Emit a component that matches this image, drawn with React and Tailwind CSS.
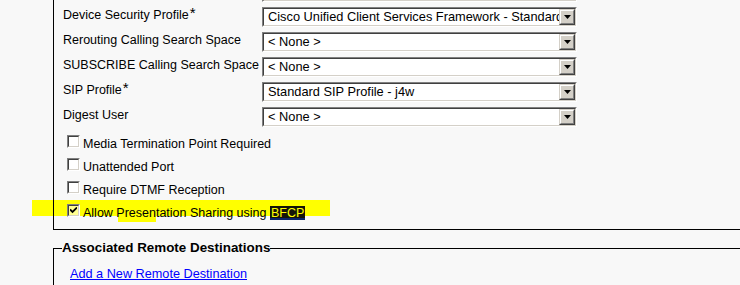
import React from 'react';

const rows = [
  { label: '', value: '', required: false },
  { label: 'Device Security Profile', value: 'Cisco Unified Client Services Framework - Standard SIP Non-Secure Profile', required: true },
  { label: 'Rerouting Calling Search Space', value: '< None >' },
  { label: 'SUBSCRIBE Calling Search Space', value: '< None >' },
  { label: 'SIP Profile', value: 'Standard SIP Profile - j4w', required: true },
  { label: 'Digest User', value: '< None >' },
];

const checks = [
  { label: 'Media Termination Point Required', checked: false },
  { label: 'Unattended Port', checked: false },
  { label: 'Require DTMF Reception', checked: false },
  { label: 'Allow Presentation Sharing using', checked: true, selected: 'BFCP' },
];

function Select({ value }) {
  return (
    <div className="w-[315px] h-[20px] border border-t-[#808080] border-l-[#808080] border-b-white border-r-white">
      <div className="h-full flex border border-t-[#404040] border-l-[#404040] border-b-[#d4d0c8] border-r-[#d4d0c8] bg-white">
        <div className="flex-1 min-w-0 overflow-hidden whitespace-nowrap pl-[4px] text-[12.8px] leading-[16px] text-black">
          {value}
        </div>
        <div className="w-[16px] h-full border border-t-[#d4d0c8] border-l-[#d4d0c8] border-b-[#404040] border-r-[#404040]">
          <div className="h-full flex items-center justify-center bg-[#d4d0c8] border border-t-white border-l-white border-b-[#808080] border-r-[#808080]">
            <svg width="7" height="4" viewBox="0 0 7 4">
              <path d="M0 0h7L3.5 4z" fill="#000" />
            </svg>
          </div>
        </div>
      </div>
    </div>
  );
}

function Checkbox({ checked }) {
  return (
    <div className="w-[13px] h-[13px] mb-[4px] shrink-0 border border-t-[#808080] border-l-[#808080] border-b-white border-r-white">
      <div className={`w-full h-full flex items-center justify-center border border-t-[#404040] border-l-[#404040] border-b-[#d4d0c8] border-r-[#d4d0c8] ${checked ? 'bg-[#ffff90]' : 'bg-white'}`}>
        {checked && (
          <svg width="7" height="7" viewBox="0 0 7 7">
            <path d="M0 2.5l2.5 2.5L7 0.5" stroke="#000" strokeWidth="1.8" fill="none" />
          </svg>
        )}
      </div>
    </div>
  );
}

export default function App() {
  return (
    <div className="relative w-[740px] h-[285px] overflow-hidden bg-[#f8f8f8] font-['Liberation_Sans',Arial,sans-serif] text-[12.5px] text-black">
      {/* highlighter marks */}
      <div className="absolute left-[32px] top-[200px] w-[298px] h-[16px] bg-[#ffff00]" />
      <div className="absolute left-[118px] top-[215px] w-[38px] h-[7px] bg-[#ffff00]" />

      <div className="relative ml-[53px] border-l border-b border-black pl-[9px] pb-[5px]">
        <div className="-mt-[18px] flex flex-col gap-[5px]">
          {rows.map((r, i) => (
            <div key={i} className="flex items-start">
              <div className="w-[199px] leading-[16px] whitespace-nowrap">
                {r.label}
                {r.required && <span className="inline-block align-top text-[15px] leading-[11px] ml-[1px]">*</span>}
              </div>
              <Select value={r.value} />
            </div>
          ))}
        </div>

        <div className="mt-[5px] pl-[4px] flex flex-col">
          {checks.map((c, i) => (
            <div key={i} className="h-[23px] flex items-center gap-[3px] whitespace-nowrap">
              <Checkbox checked={c.checked} />
              <span className="leading-[16px]">
                {c.label}
                {c.selected && (
                  <>
                    {' '}
                    <span className="bg-[linear-gradient(to_bottom,#141408_88%,#0a246a_88%)] text-[#ffff00] px-[1px]">{c.selected}</span>
                  </>
                )}
              </span>
            </div>
          ))}
        </div>
      </div>

      <div className="relative ml-[53px] mt-[10px]">
        <div className="h-[16px] flex items-center">
          <div className="self-end w-[9px] h-[8px] border-l border-t border-black" />
          <div className="font-bold text-[13.4px] leading-[16px] whitespace-nowrap">Associated Remote Destinations</div>
          <div className="flex-1 h-px bg-black mt-[1px]" />
        </div>
        <div className="border-l border-black pl-[16px] pt-[9px] h-[40px]">
          <a href="#" className="text-[#0000ff] underline text-[12.7px] leading-[16px]">Add a New Remote Destination</a>
        </div>
      </div>
    </div>
  );
}
